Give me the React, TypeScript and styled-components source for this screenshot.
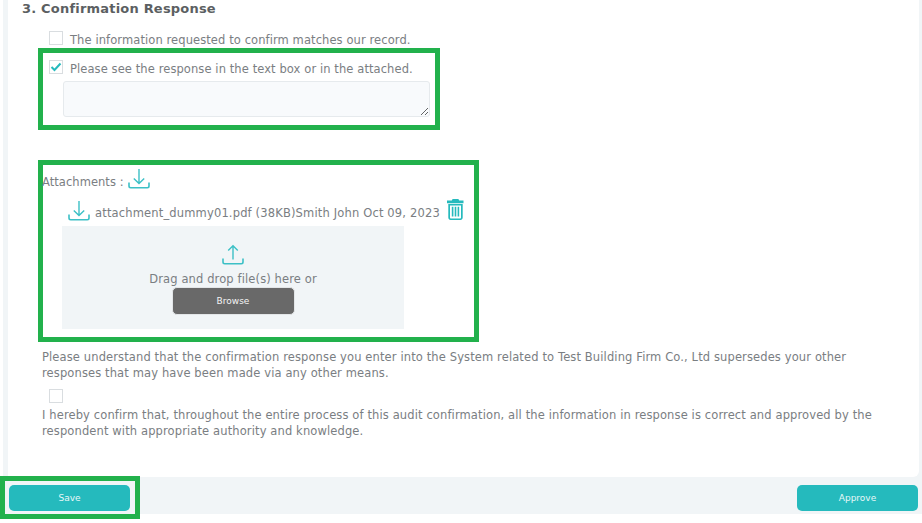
import { createGlobalStyle, styled } from 'styled-components';

const GlobalStyle = createGlobalStyle`
  html, body {
    margin: 0;
    padding: 0;
    background: #fff;
  }
  body {
    font-family: "DejaVu Sans", Verdana, sans-serif;
    font-size: 11.5px;
    letter-spacing: 0.12px;
    color: #7a7e82;
  }
`;

const TrayIcon = ({ up }: { up?: boolean }) => (
  <svg width="22" height="22" viewBox="0 0 22 22" fill="none" stroke="#3cc0c6" strokeWidth="1.4">
    <path d="M1 14.5v3.6c0 1 .7 1.7 1.7 1.7h16.6c1 0 1.7-.7 1.7-1.7v-3.6" strokeWidth="1.6" />
    {up ? <path d="M11 15.5V2M6.2 6.6 11 1.8l4.8 4.8" /> : <path d="M11 1v14.4M5.8 10.4l5.2 5.2 5.2-5.2" />}
  </svg>
);

const TrashIcon = () => (
  <svg width="17" height="21" viewBox="0 0 17 21">
    <path fill="#25babd" d="M5.6 0h5.8l.8 1.6h4.3v2.6H0V1.6h4.8z" />
    <path
      fill="#25babd"
      fillRule="evenodd"
      d="M1.3 5h14.4v13.6c0 1.3-1 2.4-2.3 2.4H3.6c-1.3 0-2.3-1.1-2.3-2.4zM3 6.6v11.8c0 .6.4 1 1 1h9c.6 0 1-.4 1-1V6.6z"
    />
    <path fill="#25babd" d="M4.8 7.8h1.6v9.8H4.8zM7.7 7.8h1.6v9.8H7.7zM10.6 7.8h1.6v9.8h-1.6z" />
  </svg>
);

const App = () => {
  return (
    <Page>
      <GlobalStyle />
      <Frame>
        <Card>
          <Heading>3. Confirmation Response</Heading>
          <PlainOption>
            <CheckBox />
            <OptionText>The information requested to confirm matches our record.</OptionText>
          </PlainOption>
          <ResponseBox>
            <CheckedOption>
              <CheckBox>
                <svg width="12" height="10" viewBox="0 0 12 10" fill="none" stroke="#25babd" strokeWidth="2">
                  <path d="M1.5 5l3 3 6-6.5" />
                </svg>
              </CheckBox>
              <OptionText>Please see the response in the text box or in the attached.</OptionText>
            </CheckedOption>
            <ResponseInput />
          </ResponseBox>
          <AttachmentBox>
            <AttachmentsLabel>
              <AttachmentsText>Attachments :</AttachmentsText>
              <TrayIcon />
            </AttachmentsLabel>
            <FileRow>
              <FileIcon>
                <TrayIcon />
              </FileIcon>
              <FileText>attachment_dummy01.pdf (38KB)Smith John Oct 09, 2023</FileText>
              <TrashSlot>
                <TrashIcon />
              </TrashSlot>
            </FileRow>
            <DropZone>
              <TrayIcon up />
              <DropText>Drag and drop file(s) here or</DropText>
              <BrowseButton>Browse</BrowseButton>
            </DropZone>
          </AttachmentBox>
          <Notice>
            Please understand that the confirmation response you enter into the System related to Test Building Firm
            Co., Ltd supersedes your other responses that may have been made via any other means.
          </Notice>
          <ConfirmCheck>
            <CheckBox />
          </ConfirmCheck>
          <Notice>
            I hereby confirm that, throughout the entire process of this audit confirmation, all the information in
            response is correct and approved by the respondent with appropriate authority and knowledge.
          </Notice>
        </Card>
      </Frame>
      <Footer>
        <SaveBox>
          <ActionButton>Save</ActionButton>
        </SaveBox>
        <ActionButton>Approve</ActionButton>
      </Footer>
    </Page>
  );
};

export default App;

const Page = styled.div`
  width: 922px;
  height: 523px;
  overflow: hidden;
  background: #fff;
`;

const Frame = styled.div`
  height: 477px;
  margin-left: 3px;
  padding: 0 3px 0 5px;
  background: #f1f5f7;
`;

const Card = styled.main`
  box-sizing: border-box;
  height: 477px;
  padding: 1px 0 0 14px;
  background: #fff;
  border-radius: 0 0 6px 0;
  display: flex;
  flex-direction: column;
`;

const Heading = styled.h2`
  flex: none;
  margin: 0;
  height: 30px;
  font-size: 13px;
  line-height: 16px;
  font-weight: 700;
  letter-spacing: 0.2px;
  color: #5c5f62;
`;

const PlainOption = styled.label`
  display: flex;
  align-items: flex-start;
  gap: 7px;
  height: 18px;
  margin-left: 27px;
`;

const CheckedOption = styled(PlainOption)`
  margin-left: 6px;
`;

const CheckBox = styled.span`
  box-sizing: border-box;
  display: flex;
  align-items: center;
  justify-content: center;
  flex: none;
  width: 14px;
  height: 14px;
  border: 1px solid #d9dde0;
  background: #fff;
`;

const OptionText = styled.span`
  line-height: 18px;
  letter-spacing: 0.09px;
  white-space: nowrap;
`;

const ResponseBox = styled.section`
  box-sizing: border-box;
  flex: none;
  width: 402px;
  height: 82px;
  margin: -1px 0 0 16px;
  padding-top: 7px;
  border: 5px solid #22b14c;
`;

const ResponseInput = styled.textarea`
  box-sizing: border-box;
  display: block;
  width: 367px;
  height: 36px;
  margin: 3px 0 0 20px;
  padding: 0;
  background: #f8fafc;
  border: 1px solid #e6eaed;
  border-radius: 3px;
`;

const AttachmentBox = styled.section`
  box-sizing: border-box;
  flex: none;
  width: 441px;
  height: 182px;
  margin: 30px 0 0 16px;
  border: 5px solid #22b14c;
`;

const AttachmentsLabel = styled.div`
  display: flex;
  align-items: center;
  gap: 4px;
  height: 22px;
  margin-top: 3px;
  margin-left: -1px;
`;

const AttachmentsText = styled.span`
  margin-top: 6px;
  letter-spacing: 0.05px;
`;

const FileRow = styled.div`
  display: flex;
  align-items: flex-start;
  height: 24px;
  margin: 8px 0 0 25px;
`;

const FileIcon = styled.span`
  margin-top: 2px;
  line-height: 0;
`;

const FileText = styled.span`
  margin: 7px 7px 0 5px;
  line-height: 16px;
  letter-spacing: 0.16px;
  white-space: nowrap;
`;

const TrashSlot = styled.span`
  margin-top: 1px;
  line-height: 0;
`;

const DropZone = styled.div`
  box-sizing: border-box;
  display: flex;
  flex-direction: column;
  align-items: center;
  width: 342px;
  height: 103px;
  margin: 4px 0 0 19px;
  padding-top: 18px;
  background: #f1f5f7;
`;

const DropText = styled.div`
  margin-top: 5px;
  line-height: 16px;
`;

const BrowseButton = styled.button`
  width: 123px;
  height: 28px;
  margin-top: 0;
  border: 1px solid #e3e6e8;
  border-radius: 5px;
  background: #696969;
  color: #f4f4f4;
  font-family: "DejaVu Sans", Verdana, sans-serif;
  font-size: 9px;
`;

const Notice = styled.p`
  width: 840px;
  margin: 7px 0 0 20px;
  line-height: 16px;
  letter-spacing: 0.12px;
`;

const ConfirmCheck = styled.div`
  margin: 8px 0 -3px 27px;
`;

const Footer = styled.footer`
  display: flex;
  align-items: flex-start;
  justify-content: space-between;
  height: 37px;
  padding-right: 4px;
  background: #f1f5f7;
`;

const SaveBox = styled.div`
  box-sizing: border-box;
  display: flex;
  flex: none;
  width: 140px;
  height: 43px;
  margin-top: -1px;
  padding: 4px 0 0 4px;
  border: 5px solid #22b14c;
`;

const ActionButton = styled.button`
  width: 121px;
  height: 26px;
  margin-top: 8px;
  border: 0;
  border-radius: 5px;
  background: #25babd;
  color: #e8f8f8;
  font-family: "DejaVu Sans", Verdana, sans-serif;
  font-size: 9px;
  ${SaveBox} & {
    margin-top: 0;
  }
`;
